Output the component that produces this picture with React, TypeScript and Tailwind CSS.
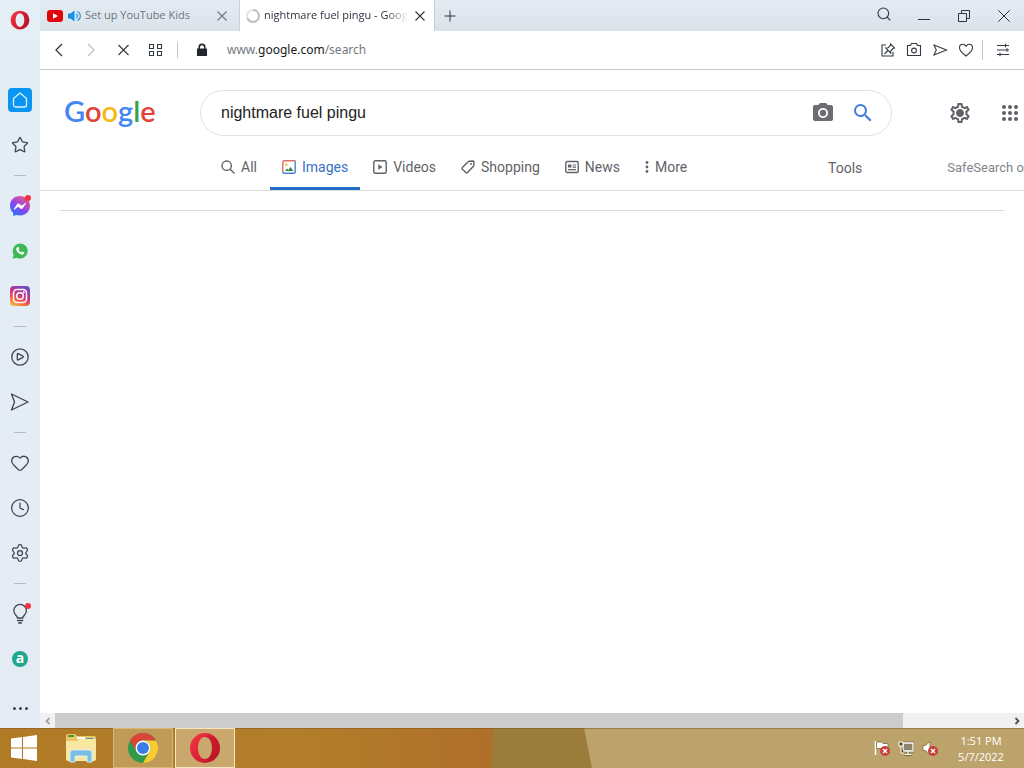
import { useState, type ReactNode } from 'react'
import { Clock, Heart, Search, Settings, Star } from 'lucide-react'
import { MdOutlineSettings, MdPhotoCamera, MdSearch } from 'react-icons/md'

interface IconProps {
  className?: string
}

interface SideItem {
  name: string
  icon: ReactNode
  badge?: boolean
}

interface SearchTab {
  name: string
  icon: ReactNode
}

function OperaLogo({ className = '' }: IconProps) {
  return (
    <svg viewBox="0 0 32 32" className={className} aria-hidden="true">
      <defs>
        <linearGradient id="opera-ring" x1="0" y1="0" x2="1" y2="1">
          <stop offset="0" stopColor="#ef3a45" />
          <stop offset="0.55" stopColor="#dc1f33" />
          <stop offset="1" stopColor="#b81a28" />
        </linearGradient>
      </defs>
      <path
        fill="url(#opera-ring)"
        fillRule="evenodd"
        d="M16 1a15 15 0 1 0 0 30a15 15 0 1 0 0-30zM16 5c4.400 0 7 4.900 7 11s-2.600 11-7 11s-7-4.900-7-11s2.600-11 7-11z"
      />
      <path fill="#a3121f" opacity="0.35" d="M16 5c3-2.600 7-2 10 .5c6.500 6 6.500 15 0 21c-3 2.500-7 3-10 .5c4.400 0 7-4.900 7-11s-2.600-11-7-11z" />
    </svg>
  )
}

function PlaneIcon({ className = '' }: IconProps) {
  return (
    <svg viewBox="0 0 20 20" fill="none" stroke="currentColor" strokeWidth="1.3" strokeLinejoin="round" className={className} aria-hidden="true">
      <path d="M1.500 2L18 10L1.500 18L4.500 10z" />
    </svg>
  )
}

function CloseIcon() {
  return (
    <svg viewBox="0 0 12 12" className="size-3" fill="none" stroke="currentColor" strokeWidth="1.1" aria-hidden="true">
      <path d="M1.500 1.500l9 9M10.500 1.500l-9 9" />
    </svg>
  )
}

function HomeIcon() {
  return (
    <span className="flex size-6 items-center justify-center rounded-sm bg-[#0a95f2]">
      <svg viewBox="0 0 18 18" fill="none" stroke="#d9f3ff" strokeWidth="1.3" strokeLinejoin="round" className="size-[18px]" aria-hidden="true">
        <path d="M2.500 7.500L9 2l6.500 5.500v6.500a2 2 0 0 1-2 2h-9a2 2 0 0 1-2-2z" />
      </svg>
    </span>
  )
}

function MessengerIcon() {
  return (
    <svg viewBox="0 0 20 20" className="size-5" aria-hidden="true">
      <defs>
        <linearGradient id="messenger" x1="0.100" y1="1" x2="0.800" y2="0">
          <stop offset="0" stopColor="#1683ff" />
          <stop offset="0.45" stopColor="#8446f5" />
          <stop offset="1" stopColor="#f6577e" />
        </linearGradient>
      </defs>
      <path fill="url(#messenger)" d="M10 0C4.300 0 0 4.200 0 9.700c0 2.900 1.200 5.400 3.100 7.100l.1 2.400c0 .5.500.8 1 .6l2-.9c1.200.3 2.500.5 3.800.5c5.700 0 10-4.200 10-9.700S15.700 0 10 0z" />
      <path fill="#fff" d="M4 12.800l3-4.600c.5-.7 1.400-.9 2.100-.4l2.300 1.700q.3.200.6 0l3.100-2.400c.4-.3.900.2.700.6l-3 4.600c-.5.700-1.400.9-2.100.4l-2.300-1.700q-.3-.2-.6 0l-3.100 2.400c-.4.300-1-.2-.7-.6z" />
    </svg>
  )
}

function WhatsappIcon() {
  return (
    <svg viewBox="0 0 18 18" className="size-4" aria-hidden="true">
      <path fill="#3fb955" d="M9.200.5a8.500 8.500 0 1 1-4 16L.6 17.600l1.300-4.400A8.500 8.500 0 0 1 9.200.5z" />
      <path fill="#fff" d="M6.400 4.400c.4-.2.800 0 1 .4l.7 1.500c.1.400-.6 1-.7 1.300c.7 1.400 1.700 2.300 3.100 3c.4 0 .9-1.100 1.300-1l1.700.8c.4.200.4.600.2 1.100c-.5 1.300-1.800 1.800-3.100 1.500c-3-.7-5.300-3-5.900-5.600c-.2-1.200.6-2.700 1.700-3z" />
    </svg>
  )
}

function InstagramIcon() {
  return (
    <svg viewBox="0 0 20 20" className="size-5" aria-hidden="true">
      <defs>
        <linearGradient id="instagram" x1="0.200" y1="1" x2="0.700" y2="0">
          <stop offset="0" stopColor="#fcb545" />
          <stop offset="0.3" stopColor="#f3613f" />
          <stop offset="0.6" stopColor="#c5308c" />
          <stop offset="1" stopColor="#6a4bc9" />
        </linearGradient>
      </defs>
      <rect width="20" height="20" rx="4" fill="url(#instagram)" />
      <rect x="3.500" y="3.500" width="13" height="13" rx="3.500" fill="none" stroke="#fff" strokeWidth="1.500" />
      <circle cx="10" cy="10" r="3.300" fill="none" stroke="#fff" strokeWidth="1.500" />
      <circle cx="13.800" cy="6.200" r="1" fill="#fff" />
    </svg>
  )
}

function PlayerIcon() {
  return (
    <svg viewBox="0 0 20 20" fill="none" stroke="currentColor" strokeWidth="1.300" strokeLinejoin="round" className="size-5" aria-hidden="true">
      <circle cx="10" cy="10" r="8.200" />
      <path d="M7.300 7.300c0-.7.300-.8.900-.7l4.300 2.200c1.200.6 1.200 1.300 0 1.900l-4.300 2.200c-.6.200-.9 0-.9-.6z" />
    </svg>
  )
}

function BulbIcon() {
  return (
    <svg viewBox="0 0 20 22" fill="none" stroke="currentColor" strokeWidth="1.300" strokeLinecap="round" className="h-[22px] w-5" aria-hidden="true">
      <path d="M7.500 15c0-2.200-3.700-3.200-3.700-7.300a6.300 6.300 0 0 1 12.600 0c0 4.100-3.700 5.100-3.700 7.300zM7.500 17.500h5.200M8.700 20h2.800" />
    </svg>
  )
}

const sideGroups: SideItem[][] = [
  [
    { name: 'Speed Dial', icon: <HomeIcon /> },
    { name: 'Bookmarks', icon: <Star className="size-[18px]" strokeWidth={1.7} /> },
  ],
  [
    { name: 'Messenger', icon: <MessengerIcon />, badge: true },
    { name: 'WhatsApp', icon: <WhatsappIcon /> },
    { name: 'Instagram', icon: <InstagramIcon /> },
  ],
  [
    { name: 'Player', icon: <PlayerIcon /> },
    { name: 'My Flow', icon: <PlaneIcon className="size-5" /> },
  ],
  [
    { name: 'Favorites', icon: <Heart className="size-5" strokeWidth={1.5} /> },
    { name: 'History', icon: <Clock className="size-5" strokeWidth={1.5} /> },
    { name: 'Settings', icon: <Settings className="size-5" strokeWidth={1.5} /> },
  ],
  [
    { name: 'Tips', icon: <BulbIcon />, badge: true },
    {
      name: 'Amazon Assistant',
      icon: (
        <span className="flex size-4 items-center justify-center rounded-full bg-[#1fa78f] pb-px text-sm/4 font-bold text-white">a</span>
      ),
    },
  ],
]

function Sidebar() {
  return (
    <aside className="flex w-10 shrink-0 flex-col items-center bg-linear-to-b from-[#e3eef5] to-[#e5ebf4] text-[#3d444f]">
      <button aria-label="Opera menu" className="flex h-10 w-10 shrink-0 items-center justify-center">
        <OperaLogo className="size-5" />
      </button>
      <nav className="mt-[37px] flex flex-col items-center">
        {sideGroups.map((group, index) => (
          <div key={group[0].name} className="flex flex-col items-center">
            {index > 0 && (
              <div className="flex h-4 items-center">
                <span className="h-px w-3 bg-[#b4bbc4]" />
              </div>
            )}
            {group.map((item) => (
              <button key={item.name} aria-label={item.name} className="relative flex h-[45px] w-10 items-center justify-center">
                {item.icon}
                {item.badge && <span className="absolute top-3 right-[9px] size-1.5 rounded-full bg-[#f2333f]" />}
              </button>
            ))}
          </div>
        ))}
      </nav>
      <button aria-label="More" className="mt-auto flex h-10 w-10 items-center justify-center gap-[3px]">
        <span className="size-[3px] rounded-full bg-[#3d444f]" />
        <span className="size-[3px] rounded-full bg-[#3d444f]" />
        <span className="size-[3px] rounded-full bg-[#3d444f]" />
      </button>
    </aside>
  )
}

function TabBar() {
  return (
    <header className="flex h-[31px] shrink-0 items-stretch bg-linear-to-b from-[#e4ebf3] to-[#dbe3ea] text-[11px] text-[#2e3440]">
      <div className="flex w-[200px] items-center border-r border-[#c9d0d7] pl-[7px] text-[#6d7681]">
        <svg viewBox="0 0 16 12" className="h-3 w-4 shrink-0" aria-hidden="true">
          <rect width="16" height="12" rx="3" fill="#e0060c" />
          <path d="M6 3.200L11 6L6 8.800z" fill="#fff" />
        </svg>
        <svg viewBox="0 0 14 12" className="ml-[5px] h-3 w-3.5 shrink-0" fill="none" stroke="#2a9ae0" strokeWidth="1.200" aria-hidden="true">
          <path d="M0 3.500h2.500L6.500.500v11L2.500 8.500H0z" fill="#1492e6" stroke="none" />
          <path d="M8.300 3.800a3 3 0 0 1 0 4.400M9.500 1.500a5 5 0 0 1 0 9" />
        </svg>
        <span className="ml-[3px] whitespace-nowrap">Set up YouTube Kids</span>
        <button aria-label="Close tab" className="mr-[11px] ml-auto">
          <CloseIcon />
        </button>
      </div>
      <div className="flex w-[194px] items-center bg-white pl-[5px]">
        <svg viewBox="0 0 16 16" className="size-4 shrink-0" fill="none" strokeWidth="2" aria-hidden="true">
          <circle cx="8" cy="8" r="6" stroke="#e6e3e3" />
          <path d="M8 2a6 6 0 1 1-5.500 8.500" stroke="#c3bfbf" />
        </svg>
        <span className="ml-[3px] w-36 overflow-hidden mask-r-from-85% whitespace-nowrap">nightmare fuel pingu - Google Search</span>
        <button aria-label="Close tab" className="ml-1.5">
          <CloseIcon />
        </button>
      </div>
      <button aria-label="New tab" className="flex w-[30px] items-center justify-center border-l border-[#c9d0d7]">
        <svg viewBox="0 0 12 12" className="size-3" stroke="currentColor" aria-hidden="true">
          <path d="M6 .5v11M.5 6h11" />
        </svg>
      </button>
      <div className="ml-auto flex">
        <button aria-label="Search tabs" className="flex w-10 items-center justify-center pb-1">
          <Search className="size-4" strokeWidth={1.6} />
        </button>
        <button aria-label="Minimize" className="flex w-10 items-center justify-center">
          <span className="mt-2 h-px w-3 bg-[#2e3440]" />
        </button>
        <button aria-label="Restore" className="flex w-10 items-center justify-center">
          <svg viewBox="0 0 12 12" className="size-3" fill="none" stroke="currentColor" aria-hidden="true">
            <path d="M.5 3.500h8v8h-8zM3.500 3.500v-3h8v8h-3" />
          </svg>
        </button>
        <button aria-label="Close" className="flex w-10 items-center justify-center">
          <svg viewBox="0 0 12 12" className="size-3" stroke="currentColor" aria-hidden="true">
            <path d="M.3.3l11.400 11.400M11.700.3L.3 11.700" />
          </svg>
        </button>
      </div>
    </header>
  )
}

function ToolButton({ label, className, children }: { label: string; className: string; children: ReactNode }) {
  return (
    <button aria-label={label} className={`flex h-8 items-center justify-center ${className}`}>
      <svg viewBox="0 0 16 16" className="size-4" fill="none" stroke="currentColor" strokeWidth="1.1" aria-hidden="true">
        {children}
      </svg>
    </button>
  )
}

function Toolbar() {
  return (
    <div className="flex h-[39px] shrink-0 items-center border-b border-[#c8c9cb] bg-white pr-[5px] pl-[3px] text-[#333a42]">
      <ToolButton label="Back" className="w-8">
        <path d="M11 2L5 8l6 6" strokeWidth="1.300" />
      </ToolButton>
      <ToolButton label="Forward" className="w-8 text-[#bdc0c4]">
        <path d="M5 2l6 6l-6 6" strokeWidth="1.300" />
      </ToolButton>
      <ToolButton label="Stop" className="w-8">
        <path d="M3.500 3l10 10M13.500 3l-10 10" />
      </ToolButton>
      <ToolButton label="Workspaces" className="w-8">
        <path d="M2.500 2.500h4v4h-4zM10.500 2.500h4v4h-4zM2.500 9.500h4v4h-4zM10.500 9.500h4v4h-4z" />
      </ToolButton>
      <span className="mx-1.5 h-4 w-px bg-[#c4c7cb]" />
      <ToolButton label="Site information" className="w-9">
        <path d="M3.500 7h9v6.500h-9z" fill="#22282f" stroke="#22282f" strokeLinejoin="round" />
        <path d="M5.200 7V5.200a2.800 2.800 0 0 1 5.600 0V7" stroke="#22282f" strokeWidth="1.600" />
      </ToolButton>
      <button className="ml-[7px] flex-1 cursor-text text-left font-['Noto_Sans',sans-serif] text-xs text-[#727981]">
        www.<span className="text-[#14181c]">google.com</span>/search
      </button>
      <ToolButton label="Easy setup pin" className="w-[26px]">
        <path d="M6 3H2v11h11v-4" />
        <path d="M10.500 2l4 4l-1.500.5l-2 2l-.3 2.500l-5-5l2.500-.3l2-2zM8 8.500L4.500 12" />
      </ToolButton>
      <ToolButton label="Snapshot" className="w-[26px]">
        <path d="M1.500 3.500h3l1-2h5l1 2h3v10h-13z" />
        <circle cx="8" cy="8.500" r="2.400" />
      </ToolButton>
      <ToolButton label="Send to My Flow" className="w-[26px]">
        <path d="M2 3l12.500 5L2 13l2.300-5z" />
      </ToolButton>
      <ToolButton label="Add to bookmarks" className="w-[26px]">
        <path d="M8 14C4 11 1.500 8.800 1.500 5.800C1.500 3.500 3 2.200 4.800 2.200C6.300 2.200 7.300 3 8 4.200C8.700 3 9.700 2.200 11.200 2.200c1.800 0 3.300 1.300 3.300 3.600c0 3-2.500 5.200-6.500 8.200z" />
      </ToolButton>
      <span className="ml-[3px] h-5 w-px bg-[#c4c7cb]" />
      <ToolButton label="Easy setup" className="ml-1 w-8">
        <path d="M2 3.500h12M2 8h12M2 12.500h12M10.500 1.800v3.400M12 6.300v3.400M5 10.800v3.400" />
      </ToolButton>
    </div>
  )
}

function TabSvg({ children }: { children: ReactNode }) {
  return (
    <svg viewBox="0 0 14 14" className="size-3.5" fill="none" stroke="currentColor" strokeWidth="1.400" aria-hidden="true">
      {children}
    </svg>
  )
}

const searchTabs: SearchTab[] = [
  {
    name: 'All',
    icon: (
      <TabSvg>
        <circle cx="5.700" cy="5.700" r="4.700" />
        <path d="M9.200 9.200l4.300 4.300" />
      </TabSvg>
    ),
  },
  {
    name: 'Images',
    icon: (
      <TabSvg>
        <path stroke="#e0705a" d="M13 .8H2.300Q.8.800.8 2.300V12" />
        <path stroke="#4a82c9" d="M13 .8q.2 0 .2 1.500v9.400q0 1.500-1.500 1.500H2.300q-1.500 0-1.500-1.500" />
        <path fill="#34804f" stroke="none" d="M3 11l2-2.600l1.400 1.500L8.500 7L11.400 11z" />
        <circle cx="4.400" cy="4.600" r="1.200" fill="#f0b429" stroke="none" />
      </TabSvg>
    ),
  },
  {
    name: 'Videos',
    icon: (
      <TabSvg>
        <rect x=".8" y=".8" width="12.400" height="12.400" rx="1.500" />
        <path d="M5.300 4.200L9.500 7L5.300 9.800z" fill="currentColor" stroke="none" />
      </TabSvg>
    ),
  },
  {
    name: 'Shopping',
    icon: (
      <TabSvg>
        <path strokeLinejoin="round" d="M8.200 1.300L12 1q1 0 1 1l-.3 3.600q0 .6-.5 1l-5.700 6q-.8.800-1.600 0L1.400 9.200q-.8-.8 0-1.600l5.800-5.800q.4-.4 1-.5z" />
        <circle cx="10" cy="4" r="1" fill="currentColor" stroke="none" />
      </TabSvg>
    ),
  },
  {
    name: 'News',
    icon: (
      <TabSvg>
        <rect x=".8" y="1.500" width="12.400" height="11" rx="1.500" />
        <path d="M3 4.500h3.400v3H3z" fill="currentColor" stroke="none" />
        <path d="M7.600 5H11M7.600 7.200H11M3 9.700h8" strokeWidth="1.200" />
      </TabSvg>
    ),
  },
]

function GoogleLogo() {
  return (
    <a href="#home" aria-label="Google" className="block pb-1 font-[Lato,sans-serif] text-[29px]/[40px] font-semibold">
      <span className="text-[#4285f4]">G</span>
      <span className="text-[#e0443a]">o</span>
      <span className="text-[#f5b913]">o</span>
      <span className="text-[#4285f4]">g</span>
      <span className="text-[#34a253]">l</span>
      <span className="text-[#e0443a]">e</span>
    </a>
  )
}

function ResultsPage() {
  const [query, setQuery] = useState('nightmare fuel pingu')
  const [active, setActive] = useState('Images')

  return (
    <main className="min-h-0 flex-1 overflow-hidden bg-white font-[Roboto,sans-serif] text-[#5f6368]">
      <div className="min-w-[1110px] border-b border-[#dcdcdc] pt-5">
        <div className="flex items-center">
          <div className="w-40 shrink-0 pl-6">
            <GoogleLogo />
          </div>
          <form role="search" className="flex h-[46px] w-[692px] items-center rounded-full border border-[#dfe1e5] pr-4 pl-5">
            <input
              aria-label="Search"
              value={query}
              onChange={(e) => setQuery(e.target.value)}
              className="min-w-0 flex-1 font-['Liberation_Sans',Arial,sans-serif] text-base text-[#222] outline-none"
            />
            <button type="button" aria-label="Search by image" className="text-[#6b6d70]">
              <MdPhotoCamera className="size-6" />
            </button>
            <button type="button" aria-label="Google Search" className="ml-4 text-[#3f7bd6]">
              <MdSearch className="size-6" />
            </button>
          </form>
          <button aria-label="Settings" className="relative ml-14">
            <MdOutlineSettings className="size-6" />
            <span className="absolute inset-0 m-auto size-1.5 rounded-full bg-[#5f6368]" />
          </button>
          <button aria-label="Google apps" className="ml-[26px]">
            <svg viewBox="0 0 24 24" className="size-6" fill="currentColor" aria-hidden="true">
              {[6, 12, 18].map((cy) => [6, 12, 18].map((cx) => <circle key={`${cx}-${cy}`} cx={cx} cy={cy} r="2" />))}
            </svg>
          </button>
        </div>
        <div className="mt-2.5 flex h-11 items-stretch pl-[169px] text-sm">
          <nav className="flex w-[607px] items-stretch gap-px">
            {searchTabs.map((tab) => (
              <a
                key={tab.name}
                href={`#${tab.name.toLowerCase()}`}
                onClick={() => setActive(tab.name)}
                className={`flex items-center gap-1.5 border-b-[3px] px-3 ${
                  active === tab.name ? 'border-[#1f6fc4] text-[#3b72c4]' : 'border-transparent'
                }`}
              >
                {tab.icon}
                {tab.name}
              </a>
            ))}
            <button className="flex items-center gap-1.5 border-b-[3px] border-transparent px-3">
              <svg viewBox="0 0 4 14" className="h-3.5 w-1" fill="currentColor" aria-hidden="true">
                <circle cx="2" cy="2.500" r="1.400" />
                <circle cx="2" cy="7" r="1.400" />
                <circle cx="2" cy="11.500" r="1.400" />
              </svg>
              More
            </button>
          </nav>
          <button className="px-3">Tools</button>
          <button className="ml-[73px] text-[13px] whitespace-nowrap text-[#80868b]">SafeSearch on</button>
        </div>
      </div>
      <hr className="mx-5 mt-[19px] border-[#d9d9d9]" />
    </main>
  )
}

function ScrollBar() {
  return (
    <div className="flex h-[15px] shrink-0 bg-[#f1f1f1] text-[#505050]">
      <button aria-label="Scroll left" className="flex w-[15px] items-center justify-center text-[#a3a3a3]">
        <svg viewBox="0 0 8 8" className="size-2" fill="none" stroke="currentColor" strokeWidth="1.800" aria-hidden="true">
          <path d="M5.500 1L2.500 4l3 3" />
        </svg>
      </button>
      <div className="grow-8 bg-[#cdcdcd]" />
      <div className="grow" />
      <button aria-label="Scroll right" className="flex w-[15px] items-center justify-center">
        <svg viewBox="0 0 8 8" className="size-2" fill="none" stroke="currentColor" strokeWidth="1.800" aria-hidden="true">
          <path d="M2.500 1l3 3l-3 3" />
        </svg>
      </button>
    </div>
  )
}

function RedCross() {
  return (
    <>
      <circle cx="11" cy="11" r="5" fill="#c9403a" />
      <path d="M9 9l4 4M13 9l-4 4" stroke="#fff" strokeWidth="1.400" />
    </>
  )
}

function Taskbar() {
  return (
    <footer className="relative isolate flex h-10 shrink-0 items-stretch text-white">
      <svg viewBox="0 0 1024 40" preserveAspectRatio="none" className="absolute inset-0 -z-10 size-full" aria-hidden="true">
        <defs>
          <linearGradient id="wall-left">
            <stop offset="0" stopColor="#b07a27" />
            <stop offset="0.6" stopColor="#b27e2a" />
            <stop offset="1" stopColor="#b06f2a" />
          </linearGradient>
        </defs>
        <rect width="494" height="40" fill="url(#wall-left)" />
        <path d="M494 0h120v40H491z" fill="#9b7d3b" />
        <path d="M584 0h440v40H592z" fill="#bca36c" />
        <rect width="1024" height="1" fill="#7b5418" opacity="0.5" />
      </svg>
      <button aria-label="Start" className="flex w-12 items-center justify-center">
        <svg viewBox="0 0 26 26" className="size-[26px]" fill="#fff" aria-hidden="true">
          <path d="M0 3.600L11 2v10.500H0zM12 1.900L26 0v12.500H12zM0 13.500h11V24L0 22.400zM12 13.500h14V26l-14-1.900z" />
        </svg>
      </button>
      <button aria-label="File Explorer" className="flex w-[65px] items-center justify-center">
        <svg viewBox="0 0 32 30" className="h-[30px] w-8" aria-hidden="true">
          <path d="M1 3q0-2 2-2h7l2 2h17q2 0 2 2v22H1z" fill="#e8c765" />
          <path d="M3 2h6v2H3z" fill="#49923e" />
          <path d="M12 4h8v2h-8z" fill="#fff" />
          <path d="M21 5h7v2h-7z" fill="#4a93c4" />
          <path d="M1 8h11l3-2h16v20q0 2-2 2H3q-2 0-2-2z" fill="#f8e7a1" />
          <path d="M5 29V20q0-3 3-3h16q3 0 3 3v9h-5v-6H10v6z" fill="#79bde2" stroke="#d7effa" />
        </svg>
      </button>
      <button aria-label="Google Chrome" className="flex w-[60px] items-center justify-center border border-[#d6b777] bg-[#c09b58]">
        <svg viewBox="0 0 32 32" className="size-8" aria-hidden="true">
          <circle cx="16" cy="16" r="15" fill="#2f9a4c" />
          <path d="M3 8.500A15 15 0 0 1 29 8.500H16A7.500 7.500 0 0 0 9.500 19.700z" fill="#dc4437" />
          <path d="M29 8.500A15 15 0 0 1 16 31L22.500 19.700A7.500 7.500 0 0 0 16 8.500z" fill="#fbcb2e" />
          <circle cx="16" cy="16" r="7.500" fill="#fff" />
          <circle cx="16" cy="16" r="6" fill="#3c7ce8" />
        </svg>
      </button>
      <button aria-label="Opera" className="ml-0.5 flex w-[60px] items-center justify-center border border-[#f4e6c4] bg-[#c9a76d]">
        <OperaLogo className="size-8" />
      </button>
      <div className="ml-auto flex items-center gap-2">
        <button aria-label="Action Center">
          <svg viewBox="0 0 16 16" className="size-4" aria-hidden="true">
            <path d="M1.500 1v14" stroke="#fff" strokeWidth="1.500" />
            <path d="M2.500 2h5l1.500 1.500h5V10H8L6.500 8.500h-4z" fill="#fff" stroke="#5d4a26" strokeWidth=".6" />
            <RedCross />
          </svg>
        </button>
        <button aria-label="Network">
          <svg viewBox="0 0 16 16" className="size-4" fill="none" aria-hidden="true">
            <path d="M5 3h10v8H5zM10 11v3M6.500 14.500h7" stroke="#5d4a26" strokeWidth="2.600" />
            <path d="M5 3h10v8H5z" fill="#8f856d" stroke="#fff" strokeWidth="1.300" />
            <path d="M10 11v3M6.500 14.300h7" stroke="#fff" strokeWidth="1.300" />
            <path d="M1 2h4v4H1zM3 6v7h3" fill="#5d4a26" stroke="#fff" />
          </svg>
        </button>
        <button aria-label="Volume muted">
          <svg viewBox="0 0 16 16" className="size-4" aria-hidden="true">
            <path d="M1 5.500h2.500L8 1.500v13L3.500 10.500H1z" fill="#fff" stroke="#5d4a26" strokeWidth=".6" />
            <RedCross />
          </svg>
        </button>
      </div>
      <div className="mr-2 ml-2 flex w-[70px] flex-col items-center justify-center pt-0.5 text-[11px]/4">
        <time>1:51 PM</time>
        <time>5/7/2022</time>
      </div>
    </footer>
  )
}

export default function App() {
  return (
    <div className="flex h-screen flex-col overflow-hidden font-['Open_Sans','Noto_Sans',sans-serif]">
      <div className="flex min-h-0 flex-1">
        <Sidebar />
        <div className="flex min-w-0 flex-1 flex-col">
          <TabBar />
          <Toolbar />
          <ResultsPage />
          <ScrollBar />
        </div>
      </div>
      <Taskbar />
    </div>
  )
}
